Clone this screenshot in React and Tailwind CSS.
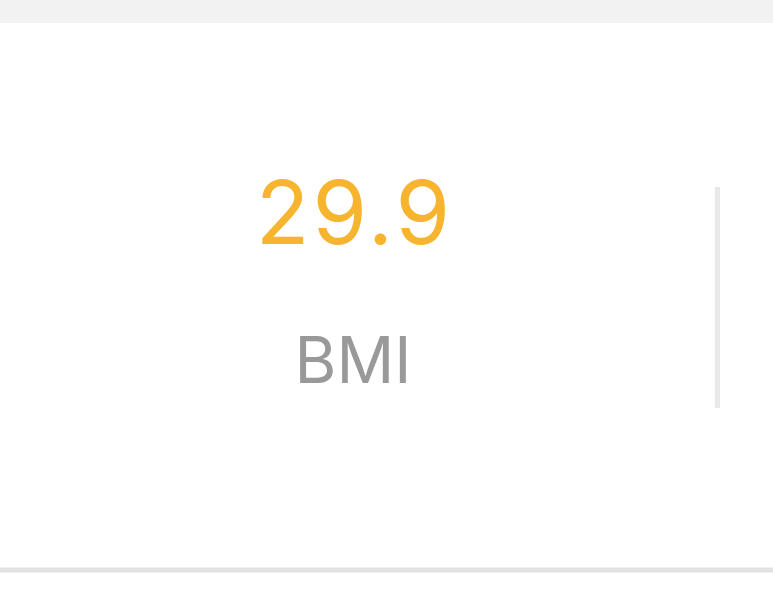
import React from "react";

const App = () => {
  return (
    <div className="w-[773px] h-[600px] bg-white overflow-hidden" style={{ fontFamily: "Inter, 'Liberation Sans', sans-serif" }}>
      {/* top band */}
      <div className="h-[23px] bg-[#f2f2f2]"></div>

      {/* stat card */}
      <div className="h-[544px] bg-white flex items-start">
        <div className="w-[715px] pr-[9px] pt-[145px] flex flex-col items-center">
          <p className="text-[88px] leading-none font-normal tracking-[3px] pl-[3px] text-[#f7b52f]">29.9</p>
          <p className="mt-[72px] text-[64px] leading-none font-normal text-[#999999]">BMI</p>
        </div>
        <div className="mt-[164px] w-[5px] h-[221px] bg-[#e9e9e9]"></div>
      </div>

      {/* bottom rule */}
      <div className="h-[1px] bg-[#f0f0f0]"></div>
      <div className="h-[4px] bg-[#e2e2e2]"></div>
      <div className="h-[1px] bg-[#f0f0f0]"></div>
    </div>
  );
};

export default App;
